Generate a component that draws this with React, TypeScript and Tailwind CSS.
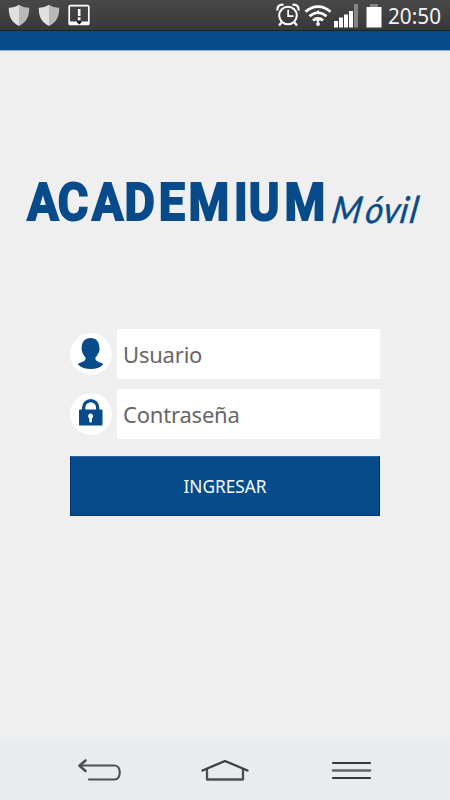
import { useState } from 'react';
import type { ReactNode } from 'react';

export default function App() {
  const [user, setUser] = useState('');
  const [password, setPassword] = useState('');

  return (
    <div className="flex h-[800px] w-[450px] flex-col overflow-hidden bg-[#efefef] font-['Noto_Sans',sans-serif]">
      <StatusBar />
      <div className="h-[19px] shrink-0 border-b border-[#8fb4d6] bg-[#084b8a] box-content" />

      <main className="flex flex-1 flex-col items-center pt-[119px]">
        <Logo />
        <form className="mt-[89px] w-[310px]" onSubmit={(e) => e.preventDefault()}>
          <Field icon={<UserIcon />} type="text" placeholder="Usuario" value={user} onChange={setUser} />
          <div className="h-[10px]" />
          <Field icon={<LockIcon />} type="password" placeholder="Contraseña" value={password} onChange={setPassword} />
          <button className="mt-[17px] flex h-[60px] w-full items-center justify-center border border-t-[#2a63a0] border-r-[#002f72] border-b-[#002f72] border-l-[#002f72] bg-[#084b8a] pt-0.5">
            <svg width="100" height="32" viewBox="0 0 100 32">
              <text x="8.500" y="22" textLength="83" lengthAdjust="spacingAndGlyphs" fontSize="18" fill="#f4fbff">INGRESAR</text>
            </svg>
          </button>
        </form>
      </main>

      <NavBar />
    </div>
  );
}

type FieldProps = {
  icon: ReactNode;
  type: string;
  placeholder: string;
  value: string;
  onChange: (value: string) => void;
};

function Field({ icon, type, placeholder, value, onChange }: FieldProps) {
  return (
    <div className="flex items-center justify-between">
      <div className="h-[42px] w-[42px] rounded-full bg-white">{icon}</div>
      <input
        type={type}
        value={value}
        placeholder={placeholder}
        onChange={(e) => onChange(e.target.value)}
        className="h-[50px] w-[263px] bg-white pl-1.5 text-[22px] tracking-[-0.2px] text-[#666] outline-none placeholder:text-[#666]"
      />
    </div>
  );
}

function Logo() {
  return (
    <svg width="450" height="70" viewBox="0 170 450 70" fill="#084b8a">
      <text
        x="30.200 63.700 101.800 137.700 175.500 208.300 258.500 274.800 314.500"
        y="220.200"
        transform="scale(0.905 1)"
        fontSize="51.500"
        fontWeight="700"
        stroke="#084b8a"
        strokeWidth="2"
        className="font-['Roboto',sans-serif]"
      >
        ACADEMIUM
      </text>
      <text
        x="0 36 55.500 73.500 84"
        y="0"
        transform="translate(330.500 222.500) skewX(-9) scale(0.930 1)"
        fontSize="37"
        fontStyle="italic"
        stroke="#084b8a"
        strokeWidth="0.400"
        strokeLinejoin="round"
        className="font-['Lato',sans-serif]"
      >
        Móvil
      </text>
    </svg>
  );
}

function UserIcon() {
  return (
    <svg width="42" height="42" viewBox="0 0 42 42" fill="#084b8a">
      <path d="M20.700 5C15 5 11.700 9 11.700 14.500c0 4 1.300 7.500 3.800 10.100.6 3.200-1.900 4-5.200 5.100-1.200.4-1.900.8-2.600 1.500C11.200 34.500 15.500 36 20.700 36s9.500-1.500 12.600-4.800c-.7-.7-1.400-1.100-2.600-1.500-3.300-1.100-5.800-1.900-5.200-5.100 2.500-2.600 3.800-6.100 3.800-10.100C29.300 9 26.400 5 20.700 5Z" />
      <path d="M11.300 15.500h18.600l-1.500 4.500H12.800Z" />
    </svg>
  );
}

function LockIcon() {
  return (
    <svg width="42" height="42" viewBox="0 0 42 42">
      <path d="M13.700 18v-3.400a7 7 0 0 1 14 0V18" fill="none" stroke="#084b8a" strokeWidth="3.300" />
      <rect x="9" y="16.500" width="23.500" height="16" rx="0.800" fill="#084b8a" />
      <path d="M20.600 20.500a2.600 2.600 0 0 0-1.300 4.800v3.200c0 1.400 2.600 1.400 2.600 0v-3.200a2.600 2.600 0 0 0-1.300-4.800Z" fill="#fff" />
    </svg>
  );
}

function Shield() {
  return (
    <svg width="22" height="23" viewBox="0 0 22 23">
      <path d="M11 .7C8 2.800 4.500 3.500.8 3.800 .5 12 3.500 18.700 11 22Z" fill="#e0e0e0" />
      <path d="M11 .7c3 2.100 6.500 2.800 10.200 3.100C21.500 12 18.500 18.700 11 22Z" fill="#b9b9b9" />
    </svg>
  );
}

function StatusBar() {
  return (
    <header className="flex h-[31px] shrink-0 items-center border-b border-[#202020] bg-linear-to-b from-[#484848] to-[#383838] pr-[4px] pl-2">
      <Shield />
      <div className="w-2" />
      <Shield />
      {/* Notification with exclamation mark */}
      <svg className="ml-2" width="22" height="22" viewBox="0 0 22 22">
        <rect x="1.200" y="1.700" width="19.600" height="18.800" rx="1" fill="none" stroke="#fff" strokeWidth="1.700" />
        <path d="M1 17.500h20v3.500H1Z" fill="#fff" />
        <path d="M9 17h4.500v1.500l-2.200 2-2.300-2Z" fill="#222" />
        <path d="M11.200 5v7M11.200 13.300v2.900" stroke="#fff" strokeWidth="2.600" />
      </svg>

      <div className="ml-auto flex items-center">
        <svg width="24" height="24" viewBox="0 0 24 24" fill="none" stroke="#fff">
          <circle cx="12" cy="12.500" r="8.800" strokeWidth="2" />
          <path d="M12.200 6.800v6.400h5.300" strokeWidth="1.800" />
          <path d="m5.500 19.500-2.500 3M18.500 19.500l2.500 3" strokeWidth="2.200" />
          <path d="M1.500 7.500C1 3.500 3.500 1.200 7.500 1.800M16.500 1.800c4-.6 6.500 1.700 6 5.700" strokeWidth="2.200" />
        </svg>
        <svg className="ml-[4px]" width="28" height="24" viewBox="0 0 28 24" fill="none" stroke="#fff" strokeWidth="2.800">
          <path d="M1.500 8.800c7.300-7 17.700-7 25 0M5.500 13.300c5.300-4.700 11.700-4.700 17 0M9 17.500c3-2.800 7-2.800 10 0" />
          {/* Traffic arrows over the arcs */}
          <path d="m14 7 3 4h-6ZM14 19.500l-2.500-3h5Z" fill="#fff" stroke="none" />
          <circle cx="14" cy="21" r="1.900" fill="#fff" stroke="none" />
        </svg>
        <svg className="ml-[2px]" width="25" height="25" viewBox="0 0 25 25" fill="#fff">
          <path d="M0 18h4v6.500H0ZM5 14.500h4v10H5ZM10 11.500h4v13h-4ZM15 8h4v16.500h-4Z" />
          <path d="M20 1h4v23.500h-4Z" fill="#858585" />
        </svg>
        <svg className="ml-[7px]" width="16" height="25" viewBox="0 0 16 25">
          <path d="M4 1h8v4H4Z" fill="#858585" />
          <path d="M.5 4h15v20.500H.5Z" fill="#fff" />
        </svg>
        <svg className="ml-[5px]" width="59" height="30" viewBox="0 0 59 30">
          <text x="1" y="23.500" textLength="53" lengthAdjust="spacingAndGlyphs" fontSize="21.500" fill="#f4f4f4">20:50</text>
        </svg>
      </div>
    </header>
  );
}

function NavBar() {
  return (
    <nav className="flex h-[60px] shrink-0 items-center justify-between bg-[#e8ecef] pr-[77px] pl-[76px]">
      <svg width="45" height="26" viewBox="0 0 45 26" fill="none" stroke="#4b5055" strokeWidth="2.200" strokeLinecap="round" strokeLinejoin="round">
        <path d="M9.500 3.500 3.500 8.700 9.500 14" strokeWidth="2.600" />
        <path d="M4 8.500h34.500c7 0 7 14 0 14H13" />
      </svg>
      <svg className="-ml-[3px]" width="48" height="26" viewBox="0 0 48 26" fill="none" stroke="#4b5055" strokeWidth="2.300" strokeLinecap="round" strokeLinejoin="round">
        <path d="M6 13v9.500h36V13" />
        <path d="M1.500 13.500 24 4l22.500 9.500" stroke="#3a3e42" />
      </svg>
      <svg width="42" height="26" viewBox="0 0 42 26" fill="none" stroke="#35393d" strokeWidth="2.200" strokeLinecap="round">
        <path d="M2 6h37M2 21h37" />
        <path d="M2 13.500h37" stroke="#62676c" strokeWidth="2.600" />
      </svg>
    </nav>
  );
}
